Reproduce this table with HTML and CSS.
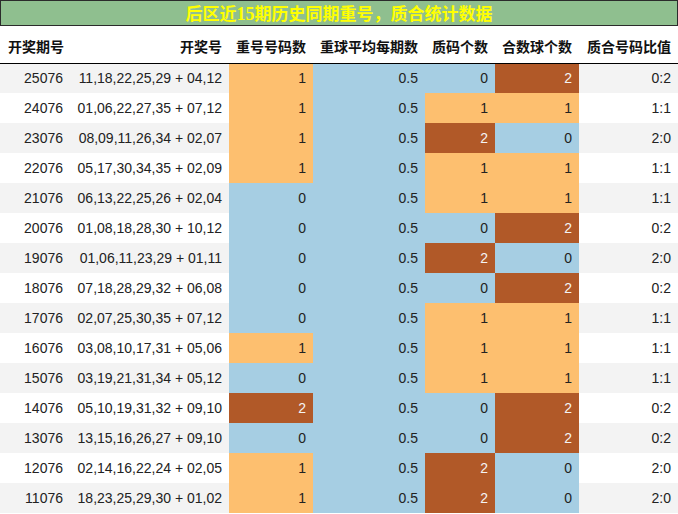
FILE: index.html
```html
<!DOCTYPE html>
<html lang="zh">
<head>
<meta charset="utf-8">
<title>后区近15期历史同期重号，质合统计数据</title>
<link rel="stylesheet" href="styles.css">
</head>
<body>
<div class="title">后区近<span class="num">15</span>期历史同期重号，质合统计数据</div>
<table class="stats">
  <colgroup>
    <col class="w-period"><col class="w-nums"><col class="w-rep"><col class="w-avg"><col class="w-prime"><col class="w-comp"><col class="w-ratio">
  </colgroup>
  <thead>
    <tr>
      <th class="left">开奖期号</th><th>开奖号</th><th>重号号码数</th><th>重球平均每期数</th><th>质码个数</th><th>合数球个数</th><th>质合号码比值</th>
    </tr>
  </thead>
  <tbody>
    <tr><td>25076</td><td>11,18,22,25,29 + 04,12</td><td class="c1">1</td><td class="c0">0.5</td><td class="c0">0</td><td class="c2">2</td><td>0:2</td></tr>
    <tr><td>24076</td><td>01,06,22,27,35 + 07,12</td><td class="c1">1</td><td class="c0">0.5</td><td class="c1">1</td><td class="c1">1</td><td>1:1</td></tr>
    <tr><td>23076</td><td>08,09,11,26,34 + 02,07</td><td class="c1">1</td><td class="c0">0.5</td><td class="c2">2</td><td class="c0">0</td><td>2:0</td></tr>
    <tr><td>22076</td><td>05,17,30,34,35 + 02,09</td><td class="c1">1</td><td class="c0">0.5</td><td class="c1">1</td><td class="c1">1</td><td>1:1</td></tr>
    <tr><td>21076</td><td>06,13,22,25,26 + 02,04</td><td class="c0">0</td><td class="c0">0.5</td><td class="c1">1</td><td class="c1">1</td><td>1:1</td></tr>
    <tr><td>20076</td><td>01,08,18,28,30 + 10,12</td><td class="c0">0</td><td class="c0">0.5</td><td class="c0">0</td><td class="c2">2</td><td>0:2</td></tr>
    <tr><td>19076</td><td>01,06,11,23,29 + 01,11</td><td class="c0">0</td><td class="c0">0.5</td><td class="c2">2</td><td class="c0">0</td><td>2:0</td></tr>
    <tr><td>18076</td><td>07,18,28,29,32 + 06,08</td><td class="c0">0</td><td class="c0">0.5</td><td class="c0">0</td><td class="c2">2</td><td>0:2</td></tr>
    <tr><td>17076</td><td>02,07,25,30,35 + 07,12</td><td class="c0">0</td><td class="c0">0.5</td><td class="c1">1</td><td class="c1">1</td><td>1:1</td></tr>
    <tr><td>16076</td><td>03,08,10,17,31 + 05,06</td><td class="c1">1</td><td class="c0">0.5</td><td class="c1">1</td><td class="c1">1</td><td>1:1</td></tr>
    <tr><td>15076</td><td>03,19,21,31,34 + 05,12</td><td class="c0">0</td><td class="c0">0.5</td><td class="c1">1</td><td class="c1">1</td><td>1:1</td></tr>
    <tr><td>14076</td><td>05,10,19,31,32 + 09,10</td><td class="c2">2</td><td class="c0">0.5</td><td class="c0">0</td><td class="c2">2</td><td>0:2</td></tr>
    <tr><td>13076</td><td>13,15,16,26,27 + 09,10</td><td class="c0">0</td><td class="c0">0.5</td><td class="c0">0</td><td class="c2">2</td><td>0:2</td></tr>
    <tr><td>12076</td><td>02,14,16,22,24 + 02,05</td><td class="c1">1</td><td class="c0">0.5</td><td class="c2">2</td><td class="c0">0</td><td>2:0</td></tr>
    <tr><td>11076</td><td>18,23,25,29,30 + 01,02</td><td class="c1">1</td><td class="c0">0.5</td><td class="c2">2</td><td class="c0">0</td><td>2:0</td></tr>
  </tbody>
</table>
</body>
</html>
```

FILE: styles.css
```css
html, body {
  margin: 0;
  padding: 0;
  background: #ffffff;
}

body {
  width: 678px;
  font-family: "Liberation Sans", Arial, "Noto Sans CJK SC", sans-serif;
  color: #222222;
}

.title {
  box-sizing: border-box;
  height: 26px;
  border: 1px solid #2b2b2b;
  background: #8fbf8f;
  color: #ffff00;
  font-family: "Noto Sans CJK SC", sans-serif;
  font-weight: bold;
  font-size: 17px;
  line-height: 23px;
  text-align: center;
}

.title .num {
  font-family: "Liberation Serif", serif;
  font-size: 18px;
}

.stats {
  width: 678px;
  table-layout: fixed;
  border-collapse: collapse;
  border-spacing: 0;
}

.w-period { width: 70px; }
.w-nums { width: 159px; }
.w-rep { width: 84px; }
.w-avg { width: 112px; }
.w-prime { width: 70px; }
.w-comp { width: 84px; }
.w-ratio { width: 99px; }

.stats th {
  height: 37px;
  padding: 3px 7px 0 0;
  box-sizing: border-box;
  border-bottom: 1px solid #000000;
  font-family: "Noto Sans CJK SC", sans-serif;
  font-weight: bold;
  font-size: 14px;
  color: #111111;
  text-align: right;
  white-space: nowrap;
  vertical-align: middle;
}

.stats th.left {
  text-align: left;
  padding-left: 8px;
}

.stats td {
  height: 30px;
  padding: 0 7px 0 0;
  box-sizing: border-box;
  font-size: 14px;
  text-align: right;
  white-space: nowrap;
  vertical-align: middle;
}

.stats tbody tr:nth-child(odd) {
  background: #f3f3f3;
}

.stats tbody tr:nth-child(even) {
  background: #ffffff;
}

.stats td.c0 { background: #a6cee3; }
.stats td.c1 { background: #fdbf6f; }
.stats td.c2 { background: #b15928; color: #f4f4f4; }
```
